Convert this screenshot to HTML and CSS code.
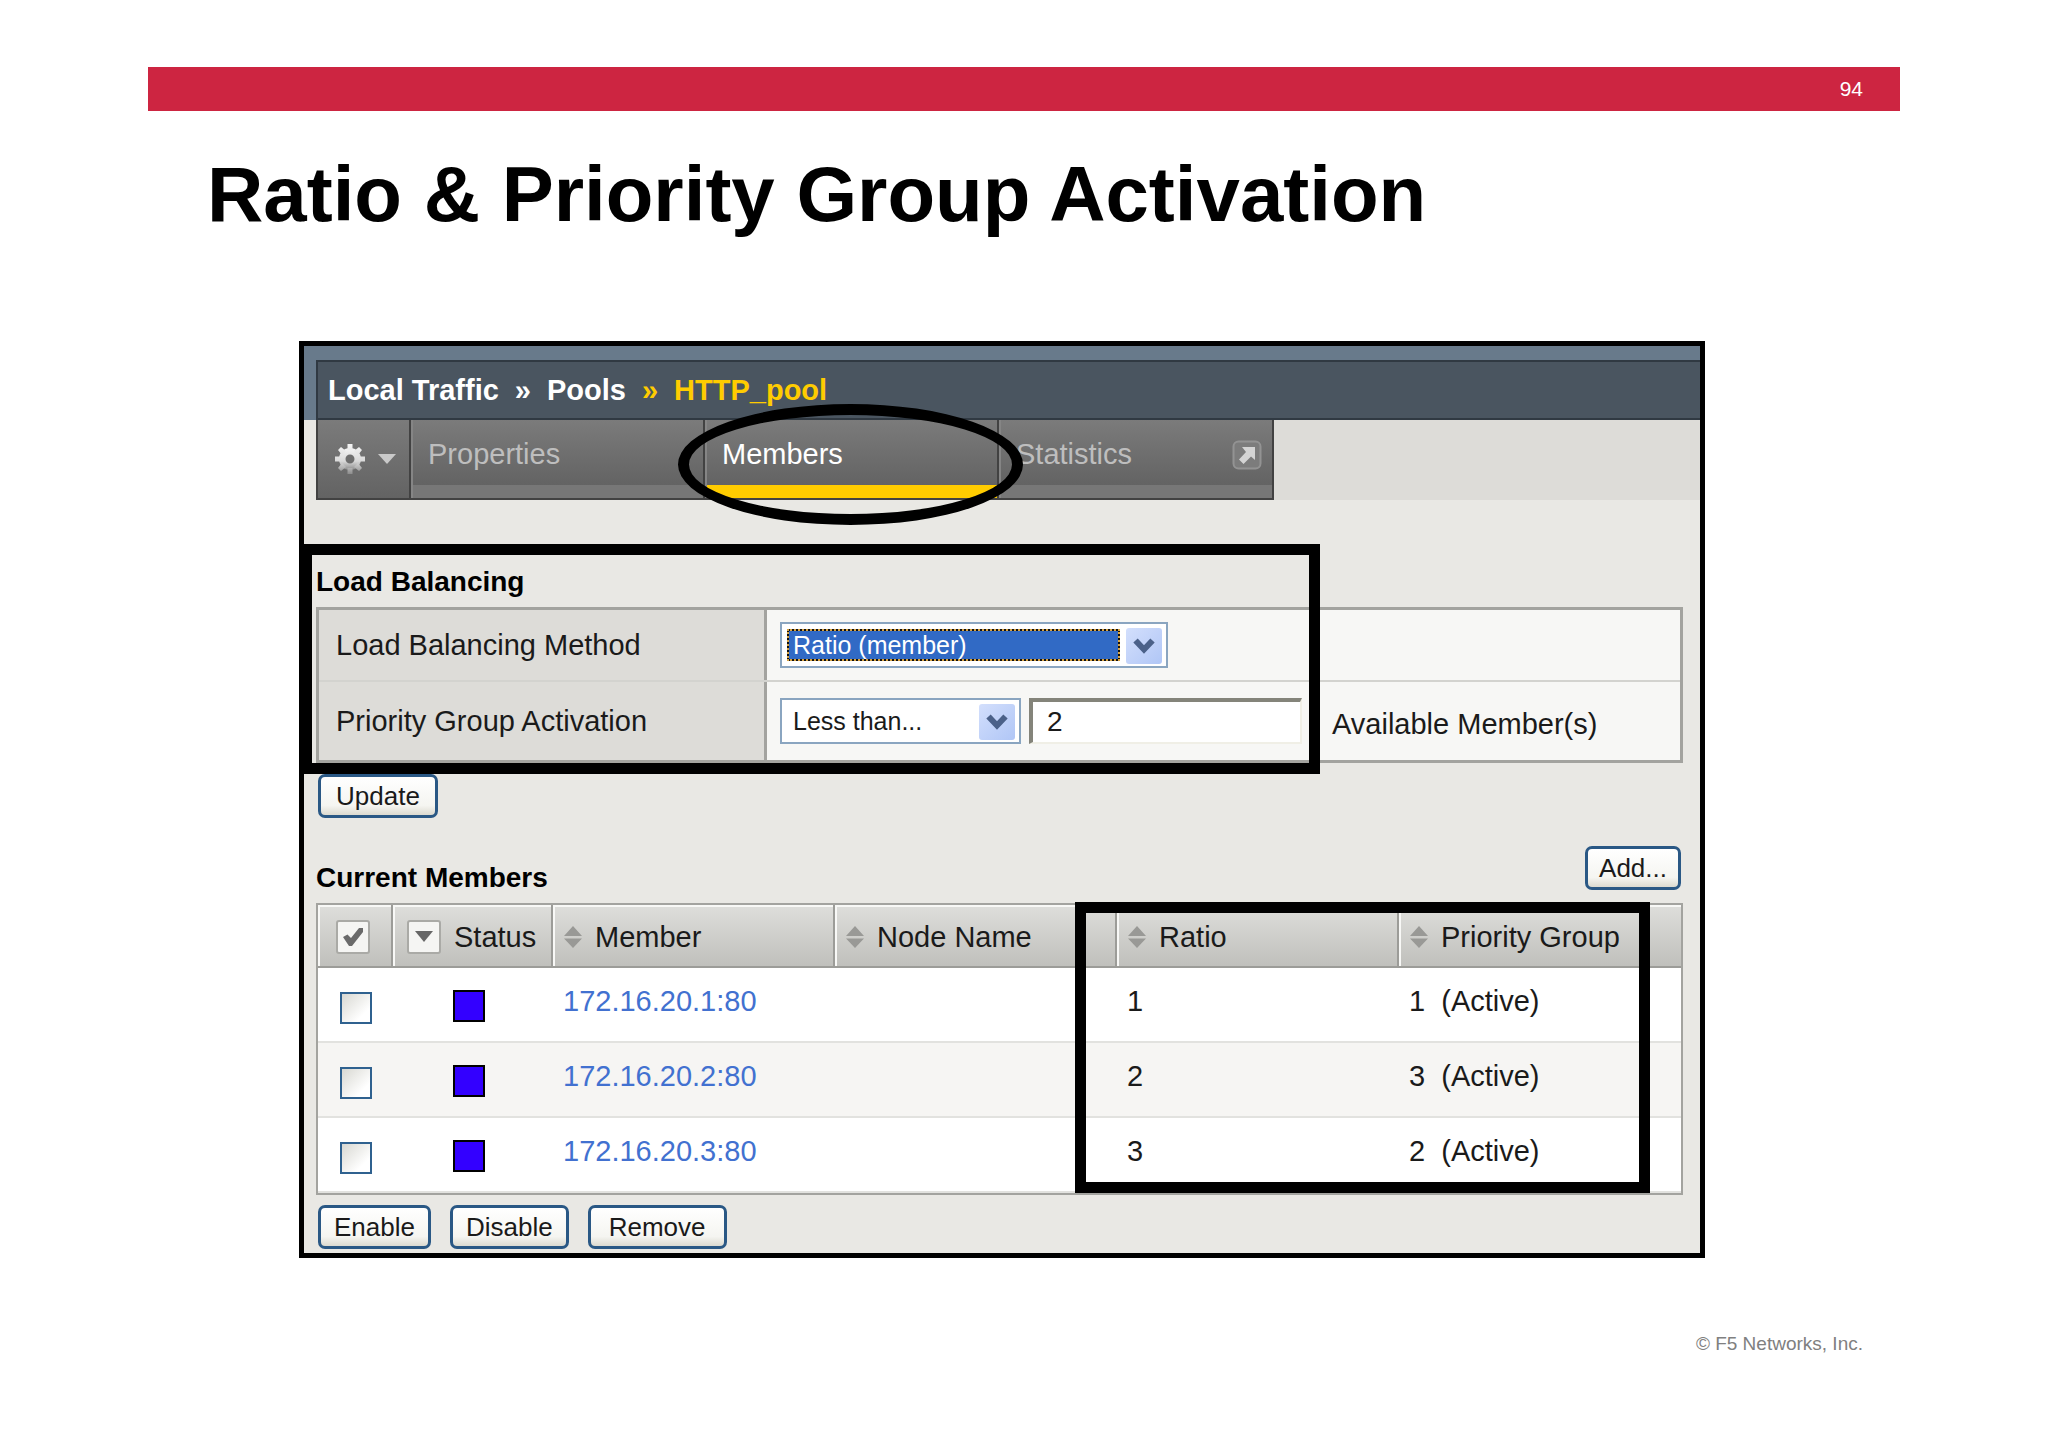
FILE: index.html
```html
<!DOCTYPE html>
<html lang="en">
<head>
<meta charset="utf-8">
<title>Ratio &amp; Priority Group Activation</title>
<link rel="stylesheet" href="styles.css">
</head>
<body>
<svg class="defs" width="0" height="0" aria-hidden="true">
  <defs>
    <linearGradient id="metal" x1="0" y1="0" x2="0" y2="1">
      <stop offset="0" stop-color="#f4f4f4"/><stop offset="0.6" stop-color="#d8d8d8"/><stop offset="1" stop-color="#8c8c8c"/>
    </linearGradient>
    <symbol id="sort" viewBox="0 0 18 22"><path d="M9 0 18 10H0zM0 12.500H18L9 22z" fill="#999996"/></symbol>
    <symbol id="chevron" viewBox="0 0 22 16"><path d="M2.500 2.500 11 11.500 19.500 2.500" fill="none" stroke="#4b6189" stroke-width="6"/></symbol>
  </defs>
</svg>
<header class="slide-bar"><span>94</span></header>
<h1 class="slide-title">Ratio &amp; Priority Group Activation</h1>

<main class="console">
  <div class="masthead">
    <nav class="crumbs" aria-label="Breadcrumb">
      <a href="#traffic">Local Traffic</a><span>»</span><a href="#pools">Pools</a><span class="current">»</span><span class="current">HTTP_pool</span>
    </nav>
  </div>
  <nav class="tabs" aria-label="Pool">
    <button class="tab tab-gear" type="button" aria-label="Options">
      <svg width="30" height="30" viewBox="0 0 30 30"><g fill="url(#metal)"><path fill-rule="evenodd" d="M15 4a11 11 0 1 0 0 22 11 11 0 0 0 0-22zm0 6.500a4.500 4.500 0 1 1 0 9 4.500 4.500 0 0 1 0-9z"/><path d="M12.500 0h5v6h-5zM12.500 24h5v6h-5zM0 12.500h6v5H0zM24 12.500h6v5h-6zM3 6l3-3 5 4-4 4zM24 3l3 3-4 5-4-4zM3 24l4-5 4 4-5 4zM27 24l-3 3-5-4 4-4z"/></g></svg>
      <svg width="18" height="10" viewBox="0 0 18 10"><path d="M0 0H18L9 10z" fill="#c9c9c9"/></svg>
    </button>
    <a class="tab" href="#properties">Properties</a>
    <a class="tab tab-active" href="#members">Members<span class="mark mark-oval"></span></a>
    <a class="tab tab-out" href="#statistics">Statistics
      <svg width="30" height="30" viewBox="0 0 30 30"><rect x="1.500" y="1.500" width="27" height="27" rx="5" fill="#7c7c7c" stroke="#939393" stroke-width="2"/><path d="M10 7H23V20L19 16.500 11.500 24 7 19.500 14 12z" fill="#d4d4d4"/></svg>
    </a>
  </nav>

  <form class="content">
    <section class="balancing">
      <h2>Load Balancing</h2>
      <div class="settings">
        <div class="setting">
          <label class="name" for="method">Load Balancing Method</label>
          <div class="value">
            <span class="combo combo-method combo-focus"><select id="method"><option>Ratio (member)</option></select><span class="drop"><svg width="22" height="16"><use href="#chevron"/></svg></span></span>
          </div>
        </div>
        <div class="setting setting-group">
          <label class="name" for="activation">Priority Group Activation</label>
          <div class="value">
            <span class="combo combo-activation"><select id="activation"><option>Less than...</option></select><span class="drop"><svg width="22" height="16"><use href="#chevron"/></svg></span></span>
            <input class="count" id="count" type="text" value="2">
            <label class="unit" for="count">Available Member(s)</label>
          </div>
        </div>
      </div>
      <span class="mark mark-balancing"></span>
    </section>
    <div class="actions actions-update"><button class="btn" type="button">Update</button></div>

    <div class="members-head">
      <h2>Current Members</h2>
      <button class="btn btn-tight" type="button">Add...</button>
    </div>
    <div class="members-wrap">
      <table class="members">
        <colgroup><col class="c-check"><col class="c-status"><col class="c-member"><col><col><col></colgroup>
        <thead>
          <tr>
            <th><div class="head head-check"><button class="mini" type="button" aria-label="Select all"><svg width="20" height="20" viewBox="0 0 20 20"><path d="M0 10 4.500 7.500 8 11 16 1 20 1V5L9 19H6z" fill="#6a6a6a"/></svg></button></div></th>
            <th><div class="head head-status"><button class="mini" type="button" aria-label="Status filter"><svg width="18" height="11" viewBox="0 0 18 11"><path d="M0 0H18L9 11z" fill="#666"/></svg></button>Status</div></th>
            <th><div class="head"><svg width="18" height="22"><use href="#sort"/></svg>Member</div></th>
            <th><div class="head"><svg width="18" height="22"><use href="#sort"/></svg>Node Name</div></th>
            <th><div class="head"><svg width="18" height="22"><use href="#sort"/></svg>Ratio</div></th>
            <th><div class="head"><svg width="18" height="22"><use href="#sort"/></svg>Priority Group</div></th>
          </tr>
        </thead>
        <tbody>
          <tr><td><input class="tick" type="checkbox" aria-label="172.16.20.1:80"></td><td><span class="status"></span></td><td><a href="#m1">172.16.20.1:80</a></td><td></td><td>1</td><td>1&nbsp; (Active)</td></tr>
          <tr><td><input class="tick" type="checkbox" aria-label="172.16.20.2:80"></td><td><span class="status"></span></td><td><a href="#m2">172.16.20.2:80</a></td><td></td><td>2</td><td>3&nbsp; (Active)</td></tr>
          <tr><td><input class="tick" type="checkbox" aria-label="172.16.20.3:80"></td><td><span class="status"></span></td><td><a href="#m3">172.16.20.3:80</a></td><td></td><td>3</td><td>2&nbsp; (Active)</td></tr>
        </tbody>
      </table>
      <span class="mark mark-members"></span>
    </div>
    <div class="actions"><button class="btn btn-tight" type="button">Enable</button><button class="btn btn-tight" type="button">Disable</button><button class="btn btn-wide" type="button">Remove</button></div>
  </form>
</main>

<footer class="slide-foot">© F5 Networks, Inc.</footer>
</body>
</html>
```

FILE: styles.css
```css
* { box-sizing: border-box; }

body {
  margin: 0;
  padding-top: 67px;
  background: #fff;
  color: #1a1a1a;
  font-family: "Liberation Sans", Arial, sans-serif;
  font-size: 29px;
  line-height: 34px;
}

a { color: inherit; text-decoration: none; }
svg { display: block; flex: none; }
button, input, select { font-family: inherit; color: inherit; margin: 0; }
h1, h2 { margin: 0; color: #000; font-weight: bold; }
h2 { font-size: 28px; line-height: 34px; }
.defs { position: absolute; }

/* Slide chrome */
.slide-bar {
  display: flex;
  align-items: center;
  justify-content: flex-end;
  height: 44px;
  margin: 0 148px;
  padding-right: 37px;
  background: #cd2541;
  color: #fff;
  font-size: 21px;
}
.slide-title {
  margin: 38px 148px 102px 207px;
  font-size: 78px;
  line-height: 90px;
}
.slide-foot {
  margin: 75px 185px 0;
  color: #808080;
  font-size: 19px;
  line-height: 22px;
  text-align: right;
}

/* Console window */
.console {
  margin: 0 343px 0 299px;
  border: 5px solid #000;
  background: #e9e8e4;
}
.masthead {
  padding: 14px 0 0 12px;
  background: #687a8b;
}
.crumbs {
  display: flex;
  align-items: center;
  gap: 16px;
  height: 60px;
  padding-left: 10px;
  border: solid #303942;
  border-width: 2px 0 2px 2px;
  background: #4a5560;
  color: #fff;
  font-size: 29px;
  font-weight: bold;
}
.crumbs .current { color: #fc0; }

.tabs {
  display: flex;
  height: 80px;
  margin-left: 12px;
  background: #dddcd8;
}
.tab {
  position: relative;
  display: flex;
  justify-content: space-between;
  width: 294px;
  padding: 17px 10px 0 17px;
  border: solid #424242;
  border-width: 0 0 2px 2px;
  background: linear-gradient(#7b7b7b, #636363 65px, #777 65px);
  box-shadow: inset 2px 0 0 #858585;
  color: #bebebe;
}
.tab-gear {
  align-items: center;
  width: 93px;
  padding: 0 13px 0 17px;
  background: linear-gradient(#7b7b7b, #636363);
  box-shadow: none;
}
.tab-active {
  background: linear-gradient(#7b7b7b, #636363 65px, #fc0 65px);
  color: #fff;
}
.tab-out { width: 277px; border-right-width: 2px; }
.tab-out svg { margin-top: 3px; }

/* Hand-drawn emphasis laid over the console */
.mark {
  position: absolute;
  z-index: 2;
  border: 11px solid #000;
  pointer-events: none;
}
.mark-oval { inset: -16px -26px -27px -27px; border-radius: 50%; }
.mark-balancing { inset: -21px 363px -11px -15px; }
.mark-members { inset: -1px 33px 2px 759px; }

.content { padding: 65px 17px 4px 12px; }

/* Load balancing settings */
.balancing { position: relative; }
.settings {
  margin-top: 8px;
  border: 3px solid #a3a39f;
  background: #f7f7f5;
}
.setting {
  display: grid;
  grid-template-columns: 448px 1fr;
  height: 70px;
}
.setting-group { height: 80px; border-top: 2px solid #d3d3cf; }
.name {
  display: flex;
  align-items: center;
  padding-left: 17px;
  border-right: 3px solid #a3a39f;
  background: #dddcd8;
}
.value { display: flex; align-items: center; padding-left: 13px; }
.combo {
  display: flex;
  height: 46px;
  padding: 4px;
  border: 2px solid #8aa5c0;
  background: #fff;
}
.combo select {
  flex: 1;
  min-width: 0;
  height: 32px;
  margin: 1px 6px 0 1px;
  padding: 0 4px;
  border: 2px solid transparent;
  border-radius: 0;
  outline: 0;
  background: none;
  appearance: none;
  font-size: 25px;
  line-height: 28px;
}
.combo-method { width: 388px; }
.combo-activation { width: 241px; }
.combo-focus select {
  border: 2px dotted #d9a441;
  background: linear-gradient(#316ac5, #316ac5) padding-box, linear-gradient(#111, #111) border-box;
  color: #fff;
}
.drop {
  display: flex;
  align-items: center;
  justify-content: center;
  width: 36px;
  height: 36px;
  border-radius: 3px;
  background: linear-gradient(135deg, #d3dffc, #b0c6f6);
}
.count {
  width: 273px;
  height: 46px;
  margin-left: 8px;
  padding: 0 14px;
  border: solid;
  border-width: 4px 2px 2px 4px;
  border-color: #84847a #f0efe6 #f0efe6 #84847a;
  background: #fff;
  font-size: 28px;
}
.unit { padding: 6px 0 0 30px; }

/* Buttons */
.actions { display: flex; gap: 19px; margin-top: 10px; padding-left: 2px; }
.actions-update { margin-top: 11px; }
.btn {
  height: 44px;
  padding: 0 15px;
  border: 3px solid #2a5885;
  border-radius: 7px;
  background: linear-gradient(#fff, #f5f5f1 75%, #dcdad0);
  font-size: 26px;
  line-height: 34px;
}
.btn-wide { padding: 0 18px; }
.btn-tight { padding: 0 13px; }

/* Members table */
.members-head {
  display: flex;
  align-items: flex-start;
  justify-content: space-between;
  margin: 28px 0 8px;
  padding-right: 2px;
}
.members-head .btn { padding: 0 11px; }
.members-head h2 { margin-top: 15px; }
.members-wrap { position: relative; }
.members {
  width: 100%;
  border: 2px solid #a3a39f;
  border-spacing: 0;
  table-layout: fixed;
  background: #fff;
}
.c-check { width: 75px; }
.c-status { width: 160px; }
.c-member { width: 282px; }
.members th {
  height: 63px;
  padding: 2px 0 0;
  border: solid #9c9c98;
  border-width: 0 2px 2px 0;
  background: linear-gradient(#dededb, #c0c0bc);
  box-shadow: inset 2px 2px 0 #f8f8f6;
  font-weight: normal;
}
.members th:last-child { border-right: 0; }
.head { display: flex; align-items: center; gap: 13px; padding-left: 11px; }
.head-check { padding-left: 18px; }
.head-status { padding-left: 14px; }
.mini {
  display: flex;
  align-items: center;
  justify-content: center;
  width: 34px;
  height: 34px;
  padding: 0;
  border: 2px solid #aaaaa6;
  border-radius: 3px;
  background: #f5f5f3;
}
.members td {
  height: 75px;
  padding: 16px 0 0 10px;
  border-bottom: 2px solid #e2e2df;
  vertical-align: top;
}
.members tr:nth-child(even) td { background: #f6f5f3; }
.members td a { color: #4271d0; }
.tick {
  display: block;
  width: 32px;
  height: 32px;
  margin: 8px 0 0 12px;
  border: 2px solid #2f618f;
  background: linear-gradient(135deg, #d8d8d2, #fff 75%);
  appearance: none;
}
.status {
  display: block;
  width: 32px;
  height: 32px;
  margin: 6px 0 0 50px;
  border: 2px solid #000;
  background: #30f;
}
```
